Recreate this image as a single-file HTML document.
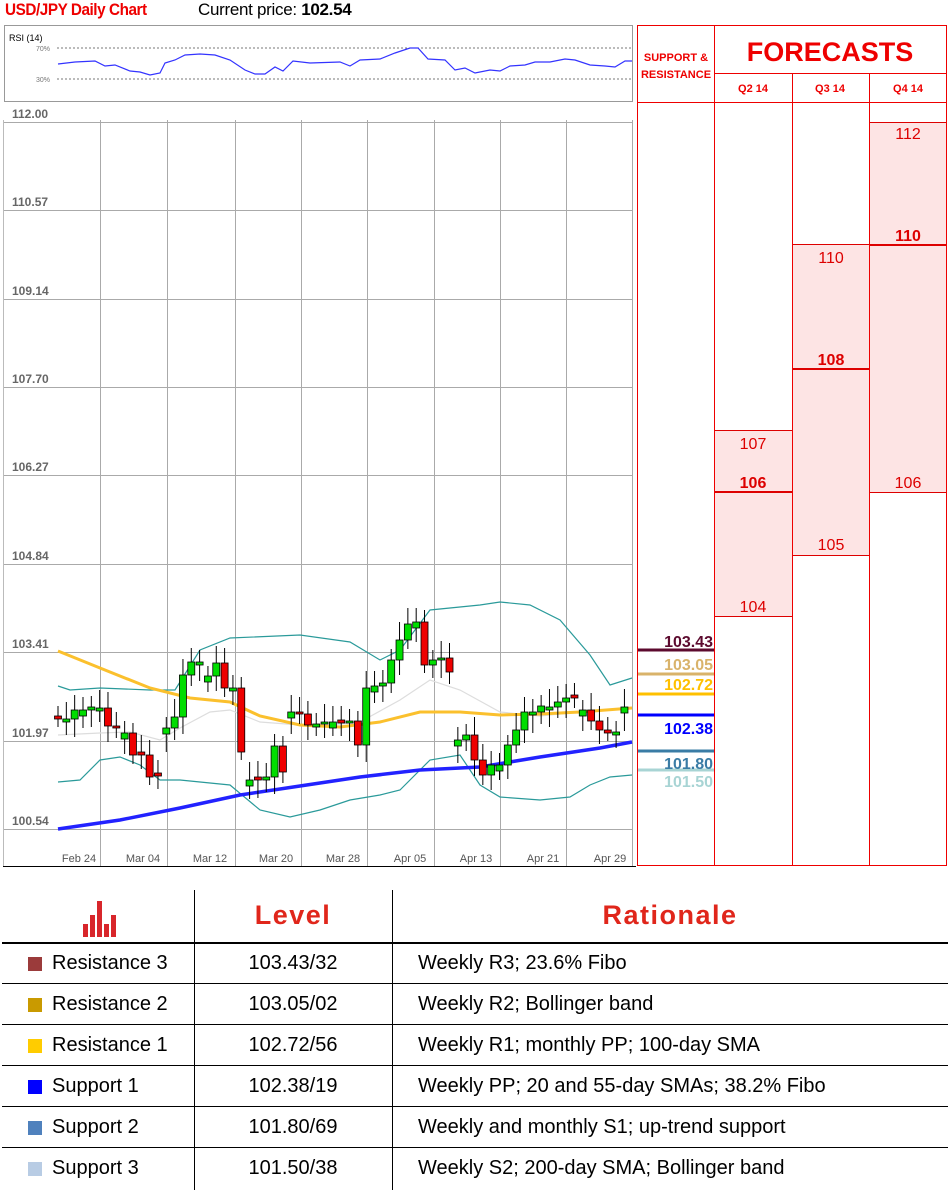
<!DOCTYPE html>
<html><head><meta charset="utf-8"><style>
body{margin:0;width:950px;height:1191px;background:#fff;position:relative;overflow:hidden;font-family:"Liberation Sans",sans-serif}
.a{position:absolute}
.t{font-family:"Liberation Sans Narrow","Liberation Sans",sans-serif}
</style></head><body>
<div class="a t" style="left:5px;top:0;font-size:17px;color:#e00;letter-spacing:-0.5px;font-weight:bold;transform:scaleX(0.9);transform-origin:left">USD/JPY Daily Chart</div>
<div class="a t" style="left:198px;top:0;font-size:17px;color:#000;letter-spacing:-0.3px">Current price: <b>102.54</b></div>
<svg class="a" style="left:0;top:0" width="950" height="870" id="s">
<rect x="4.5" y="25.5" width="628" height="76" fill="#fff" stroke="#999"/>
<text x="9" y="41" font-size="9" font-family="Liberation Sans">RSI (14)</text>
<line x1="57" y1="48" x2="632" y2="48" stroke="#777" stroke-dasharray="2,2"/>
<line x1="57" y1="79" x2="632" y2="79" stroke="#777" stroke-dasharray="2,2"/>
<text x="36" y="51" font-size="7" fill="#777">70%</text><text x="36" y="82" font-size="7" fill="#777">30%</text>
<polyline fill="none" stroke="#33f" stroke-width="1.2" points="58,64 75,62 95,61 105,66 115,65 130,71 140,72 150,75 160,73 165,63 175,60 185,55 200,54 215,55 230,60 245,70 255,74 265,74 275,67 283,71 293,61 310,63 340,62 350,66 360,60 380,59 395,53 410,48 418,48 428,59 445,60 455,70 465,68 475,73 490,70 500,71 510,66 525,65 535,62 550,62 565,59 575,60 590,65 605,66 615,67 625,61 632,61"/>
<line x1="3.5" y1="120" x2="3.5" y2="866" stroke="#bbb"/>
<line x1="3" y1="866.5" x2="636" y2="866.5" stroke="#000"/>
<g id="grid" stroke="#aaa" stroke-width="1"></g>
<g id="lab" font-size="12" fill="#666" font-weight="bold" font-family="Liberation Sans"></g>
<polyline fill="none" stroke="#ddd" stroke-width="1.2" points="58,735 100,733 130,732 160,740 180,728 210,712 230,710 260,722 300,725 330,725 360,722 400,700 430,680 460,690 500,712 540,716 580,712 632,708"/>
<polyline fill="none" stroke="#2a9a9a" stroke-width="1.2" points="58,686 70,690 100,688 150,690 175,690 200,650 230,638 300,635 350,642 380,660 400,650 430,610 480,605 500,602 530,605 560,620 590,655 610,685 632,678"/>
<polyline fill="none" stroke="#2a9a9a" stroke-width="1.2" points="58,782 80,780 100,760 120,757 140,765 160,780 180,780 230,785 260,810 290,817 320,810 350,800 380,795 400,790 430,760 460,755 480,785 500,797 540,800 570,797 590,785 610,777 632,775"/>
<polyline fill="none" stroke="#fbc02d" stroke-width="3" points="58,651 100,668 150,688 190,698 230,702 260,716 300,725 340,727 380,722 420,712 460,712 500,715 540,714 580,712 632,708"/>
<polyline fill="none" stroke="#22f" stroke-width="3.5" points="58,829 120,820 180,808 240,795 300,786 360,777 420,770 480,767 540,757 600,748 632,742"/>
<g id="c"></g>
<g font-size="11" fill="#555" font-family="Liberation Sans" text-anchor="middle">
<text x="79" y="862">Feb 24</text><text x="143" y="862">Mar 04</text><text x="210" y="862">Mar 12</text><text x="276" y="862">Mar 20</text><text x="343" y="862">Mar 28</text><text x="410" y="862">Apr 05</text><text x="476" y="862">Apr 13</text><text x="543" y="862">Apr 21</text><text x="610" y="862">Apr 29</text></g>
<rect x="715" y="430" width="77" height="186" fill="#fde4e4"/>
<rect x="793" y="244" width="76" height="311" fill="#fde4e4"/>
<rect x="870" y="122" width="77" height="370" fill="#fde4e4"/>
<g stroke="#d00" stroke-width="1"><line x1="715" y1="430.5" x2="792" y2="430.5"/><line x1="715" y1="616.5" x2="792" y2="616.5"/><line x1="793" y1="244.5" x2="869" y2="244.5"/><line x1="793" y1="555.5" x2="869" y2="555.5"/><line x1="870" y1="122.5" x2="947" y2="122.5"/><line x1="870" y1="492.5" x2="947" y2="492.5"/></g>
<g stroke="#d00" stroke-width="2"><line x1="715" y1="492" x2="792" y2="492"/><line x1="793" y1="369" x2="869" y2="369"/><line x1="870" y1="245" x2="947" y2="245"/></g>
<g fill="none" stroke="#e00" stroke-width="1">
<rect x="637.5" y="25.5" width="309" height="840"/>
<line x1="714.5" y1="25" x2="714.5" y2="866"/><line x1="792.5" y1="73" x2="792.5" y2="866"/><line x1="869.5" y1="73" x2="869.5" y2="866"/>
<line x1="714" y1="73.5" x2="947" y2="73.5"/><line x1="637" y1="102.5" x2="947" y2="102.5"/></g>
<g font-family="Liberation Sans Narrow,Liberation Sans" fill="#e00" text-anchor="middle" font-weight="bold">
<text x="676" y="61" font-size="11">SUPPORT &amp;</text><text x="676" y="78" font-size="11">RESISTANCE</text>
<text x="830" y="61" font-size="27">FORECASTS</text>
<text x="753" y="92" font-size="11">Q2 14</text><text x="830" y="92" font-size="11">Q3 14</text><text x="908" y="92" font-size="11">Q4 14</text></g>
<g font-family="Liberation Sans" fill="#d00" text-anchor="middle" font-size="16">
<text x="753" y="449">107</text><text x="753" y="488" font-weight="bold">106</text><text x="753" y="612">104</text>
<text x="831" y="263">110</text><text x="831" y="365" font-weight="bold">108</text><text x="831" y="550">105</text>
<text x="908" y="139">112</text><text x="908" y="241" font-weight="bold">110</text><text x="908" y="488">106</text></g>
<g stroke-width="3"><line x1="638" y1="650" x2="714" y2="650" stroke="#5c0a2e"/><line x1="638" y1="674" x2="714" y2="674" stroke="#d9b36a"/><line x1="638" y1="694" x2="714" y2="694" stroke="#ffc000"/><line x1="638" y1="715" x2="714" y2="715" stroke="#00f"/><line x1="638" y1="751" x2="714" y2="751" stroke="#3a7ca5"/><line x1="638" y1="770" x2="714" y2="770" stroke="#a8d4d4"/></g>
<g font-family="Liberation Sans" font-weight="bold" font-size="16" text-anchor="end">
<text x="713" y="647" fill="#5c0a2e">103.43</text><text x="713" y="670" fill="#d9b36a">103.05</text><text x="713" y="690" fill="#ffc000">102.72</text><text x="713" y="734" fill="#00f">102.38</text><text x="713" y="769" fill="#3a7ca5">101.80</text><text x="713" y="787" fill="#a8d4d4">101.50</text></g>
</svg>
<div class="a" style="left:194px;top:890px;width:1px;height:300px;background:#000"></div>
<div class="a" style="left:392px;top:890px;width:1px;height:300px;background:#000"></div>
<div class="a" style="left:2px;top:942px;width:946px;height:2px;background:#000"></div>
<div class="a" style="left:2px;top:983px;width:946px;height:1px;background:#000"></div>
<div class="a" style="left:2px;top:1024px;width:946px;height:1px;background:#000"></div>
<div class="a" style="left:2px;top:1065px;width:946px;height:1px;background:#000"></div>
<div class="a" style="left:2px;top:1106px;width:946px;height:1px;background:#000"></div>
<div class="a" style="left:2px;top:1147px;width:946px;height:1px;background:#000"></div>
<svg class="a" style="left:82px;top:900px" width="38" height="38"><g fill="#d8262b"><rect x="1" y="24" width="5" height="13"/><rect x="8" y="15" width="5" height="22"/><rect x="15" y="1" width="5" height="36"/><rect x="22" y="24" width="5" height="13"/><rect x="29" y="15" width="5" height="22"/></g></svg>
<div class="a" style="left:194px;top:900px;width:198px;text-align:center;font-size:27px;font-weight:bold;color:#e0261b;letter-spacing:1.5px">Level</div>
<div class="a" style="left:392px;top:900px;width:556px;text-align:center;font-size:27px;font-weight:bold;color:#e0261b;letter-spacing:1.5px">Rationale</div>
<div id="rows"></div>
<script>
var gy=[122,210,299,387,475,564,652,741,829],gl=["112.00","110.57","109.14","107.70","106.27","104.84","103.41","101.97","100.54"];
var g="",l="";
gy.forEach(function(y,i){g+='<line x1="4" y1="'+(y+.5)+'" x2="632" y2="'+(y+.5)+'"/>';l+='<text x="12" y="'+(y-4)+'">'+gl[i]+'</text>';});
[100,167,235,301,367,434,500,566,632].forEach(function(x){g+='<line x1="'+(x+.5)+'" y1="120" x2="'+(x+.5)+'" y2="866"/>';});
document.getElementById('grid').innerHTML=g;document.getElementById('lab').innerHTML=l;
var cl=[719,719,710,710,707,708,726,728,733,755,755,777,776,728,717,675,662,662,676,663,688,688,752,780,780,777,746,772,712,714,725,724,722,722,723,721,745,688,686,683,660,640,624,622,665,660,658,672,740,735,760,775,765,765,745,730,712,712,706,707,702,698,698,710,721,730,733,732,707];
var c="",p=719;
cl.forEach(function(v,i){var x=58+i*8.33,o=(i%5==3)?v+6:p;if(Math.abs(o-v)<2)o=v+(i%2?3:-3);var t=Math.min(o,v),b=Math.max(o,v);
c+='<line x1="'+x+'" y1="'+(t-10-(i*7%9))+'" x2="'+x+'" y2="'+(b+8+(i*5%11))+'" stroke="#000"/>';
c+='<rect x="'+(x-3.5)+'" y="'+t+'" width="7" height="'+Math.max(b-t,2)+'" fill="'+(v<o?'#0d0':'#e00')+'" stroke="#000" stroke-width="0.8"/>';p=v;});
document.getElementById('c').innerHTML=c;
var R=[["#9b3b3b","Resistance 3","103.43/32","Weekly R3; 23.6% Fibo"],["#c99a00","Resistance 2","103.05/02","Weekly R2; Bollinger band"],["#ffcc00","Resistance 1","102.72/56","Weekly R1; monthly PP; 100-day SMA"],["#0000ff","Support 1","102.38/19","Weekly PP; 20 and 55-day SMAs; 38.2% Fibo"],["#4f81bd","Support 2","101.80/69","Weekly and monthly S1; up-trend support"],["#b8cce4","Support 3","101.50/38","Weekly S2; 200-day SMA; Bollinger band"]];
var h="";R.forEach(function(r,i){var y=944+i*41;
h+='<div class="a" style="left:28px;top:'+(y+13)+'px;width:14px;height:14px;background:'+r[0]+'"></div><div class="a" style="left:52px;top:'+(y+8)+'px;font-size:20px">'+r[1]+'</div><div class="a" style="left:194px;width:198px;text-align:center;top:'+(y+8)+'px;font-size:20px">'+r[2]+'</div><div class="a" style="left:418px;top:'+(y+8)+'px;font-size:20px">'+r[3]+'</div>';});
document.getElementById('rows').innerHTML=h;
</script>
</body></html>
